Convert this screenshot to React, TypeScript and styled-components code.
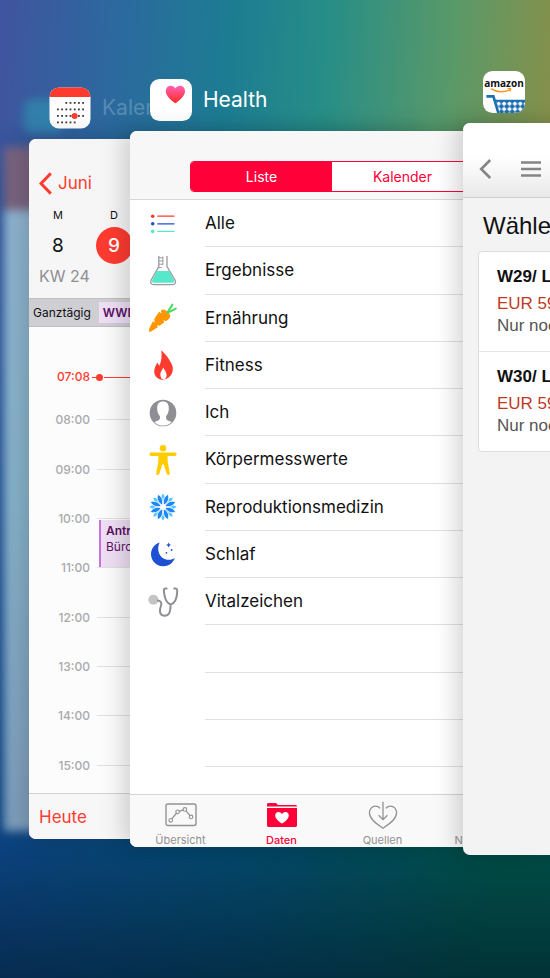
import React from "react";
import styled, { createGlobalStyle, css } from "styled-components";

const GlobalStyle = createGlobalStyle`
  *, *::before, *::after { box-sizing: border-box; }
  body { margin: 0; background: #05365a; }
  button { font: inherit; color: inherit; background: none; border: 0; padding: 0; margin: 0; cursor: pointer; }
  h1, h2, h3, p, ul, ol { margin: 0; padding: 0; font: inherit; list-style: none; }
  svg { display: block; flex: none; }
`;

const UI = `Inter, "Liberation Sans", sans-serif`;
const SHOP = `"Liberation Sans", Arial, sans-serif`;
const RED = "#ff3b30";
const PINK = "#ff0038";

/* ---------- switcher stage ---------- */

const Wallpaper = styled.div`
  position: relative;
  overflow: hidden;
  min-height: 100vh;
  display: flex;
  font-family: ${UI};
  color: #111;
  background:
    linear-gradient(to bottom, transparent 86%, rgba(2, 20, 34, 0.5) 100%),
    linear-gradient(to right, #0b437f 0%, #04496c 45%, #015048 90%);

  &::before {
    content: "";
    position: absolute;
    inset: 0;
    background: linear-gradient(94deg, #40549f 0%, #2b6a9e 20%, #1c7d92 38%, #288e86 54%, #5a9968 74%, #87904a 91%);
    mask-image: linear-gradient(to bottom, #000 12%, rgba(0, 0, 0, 0.75) 20%, rgba(0, 0, 0, 0.7) 40%, transparent 88%);
  }
`;

const Stage = styled.main`
  position: relative;
  flex: 1;
  min-width: 0;
  display: grid;
  grid-template-columns: 4fr 25fr 101fr 333fr 87fr;
  padding: 71px 0 123px;
`;

const AppSlot = styled.section<{ $column: number; $depth: number }>`
  grid-row: 1;
  grid-column: ${(p) => p.$column} / -1;
  isolation: isolate;
  margin: ${(p) => p.$depth * 8}px 0;
  min-width: 0;
  display: flex;
  flex-direction: column;
`;

const AppTitle = styled.header`
  height: 42px;
  margin: 0 0 10px 20px;
  display: flex;
  align-items: center;
  gap: 11px;
`;

const AppName = styled.h2<{ $faded?: boolean }>`
  font-size: 21px;
  line-height: 24px;
  color: ${(p) => (p.$faded ? "rgba(255,255,255,0.22)" : "#fff")};
`;

const Card = styled.div<{ $width: number; $tint: string }>`
  flex: 1;
  width: ${(p) => p.$width}px;
  display: flex;
  flex-direction: column;
  overflow: hidden;
  border-radius: 7px;
  background: ${(p) => p.$tint};
  box-shadow: -6px 0 24px rgba(0, 0, 0, 0.18);
`;

const BlurredSlot = styled(AppSlot)`
  filter: blur(5px);
`;

const BlurredIcon = styled.div`
  width: 40px;
  height: 34px;
  border-radius: 8px;
  background: #2f8fb0;
  opacity: 0.7;
`;

const BlurredCard = styled.div`
  flex: 1;
  width: 160px;
  background: linear-gradient(to bottom, #7b6480 0 63px, #90b5d1 63px, #88b4cc 50%, #809fbe 100%);
`;

/* ---------- calendar ---------- */

const CalHeader = styled.div`
  height: 159px;
  padding: 31px 0 0;
  background: #f6f6f7;
`;

const BackButton = styled.button`
  display: flex;
  align-items: center;
  gap: 6px;
  height: 26px;
  margin-left: 10px;
  color: ${RED};
  font-size: 17px;
`;

const Week = styled.ol`
  display: grid;
  grid-template-columns: repeat(7, 56px);
  margin: 11px 0 0 1px;
`;

const Day = styled.li`
  display: flex;
  flex-direction: column;
  align-items: center;
  gap: 4px;
  font-size: 11px;
  line-height: 16px;
`;

const DayNumber = styled.button<{ $today?: boolean }>`
  width: 37px;
  height: 37px;
  border-radius: 50%;
  font-size: 19px;
  font-weight: ${(p) => (p.$today ? 500 : 400)};
  background: ${(p) => (p.$today ? RED : "transparent")};
  color: ${(p) => (p.$today ? "#fff" : "#111")};
`;

const WeekLabel = styled.p`
  margin: 1px 0 0 10px;
  font-size: 16px;
  line-height: 22px;
  color: #8e8e93;
`;

const AllDay = styled.div`
  height: 29px;
  display: flex;
  align-items: center;
  gap: 8px;
  padding-left: 4px;
  background: #cfced3;
  border-top: 1px solid #c0bfc4;
  border-bottom: 1px solid #c0bfc4;
  font-size: 12px;
`;

const AllDayEvent = styled.span`
  flex: 1;
  padding-left: 4px;
  line-height: 21px;
  font-weight: 600;
  background: #eedff5;
  color: #5b1166;
`;

const DayView = styled.div`
  flex: 1;
  position: relative;
  display: flex;
  background: #fcfcfc;
  padding: 68px 0 3px;
`;

const Hours = styled.ol`
  flex: 1;
  display: grid;
  grid-auto-rows: 1fr;
`;

const Hour = styled.li`
  display: flex;
  align-items: center;
  gap: 7px;
  font-size: 12px;
  font-weight: 500;
  color: #a9a9ad;

  &::after {
    content: "";
    flex: 1;
    height: 1px;
    background: #e0e0e2;
  }
`;

const HourText = styled.span`
  width: 61px;
  text-align: right;
`;

const Now = styled.div`
  position: absolute;
  left: 0;
  right: 0;
  top: 42px;
  display: flex;
  align-items: center;
  font-size: 12px;
  font-weight: 500;
  line-height: 16px;
  color: ${RED};
`;

const NowDash = styled.span`
  width: 4px;
  height: 1px;
  margin-left: 2px;
  background: ${RED};
`;

const NowDot = styled.span`
  width: 7px;
  height: 7px;
  border-radius: 50%;
  background: ${RED};
`;

const NowLine = styled.span`
  flex: 1;
  height: 1px;
  margin-left: 1px;
  background: ${RED};
`;

const Appointment = styled.div`
  position: absolute;
  left: 70px;
  right: 0;
  top: 193px;
  height: 47px;
  padding: 3px 5px;
  border-left: 2px solid #c774e0;
  background: #efdff5;
  color: #5b1166;
  font-size: 12px;
  line-height: 16px;
`;

const Strong = styled.strong`
  display: block;
  font-weight: 600;
`;

const CalFooter = styled.footer`
  height: 46px;
  padding: 0 10px;
  display: flex;
  align-items: center;
  background: #f7f7f8;
  border-top: 1px solid #d2d2d5;
  color: ${RED};
  font-size: 17px;
`;

/* ---------- health ---------- */

const HealthBar = styled.div`
  height: 69px;
  padding: 30px 60px 0;
  background: #f7f7f7;
  border-bottom: 1px solid #d8d8da;
`;

const Segments = styled.div`
  display: flex;
  height: 31px;
  border: 1px solid ${PINK};
  border-radius: 4px;
  overflow: hidden;
`;

const Segment = styled.button<{ $on?: boolean }>`
  flex: 1;
  font-size: 14px;
  background: ${(p) => (p.$on ? PINK : "#fff")};
  color: ${(p) => (p.$on ? "#fff" : PINK)};
`;

const Categories = styled.ul`
  flex: 1;
  display: grid;
  grid-auto-rows: 1fr;
  padding-bottom: 27px;
  background: #fff;
`;

const Category = styled.li`
  display: flex;
  min-height: 24px;
`;

const CategoryButton = styled.button`
  flex: 1;
  display: flex;
  align-items: stretch;
  text-align: left;
  font-size: 17px;
`;

const CategoryIcon = styled.span`
  width: 75px;
  padding-left: 17px;
  display: flex;
  align-items: center;
`;

const CategoryLabel = styled.span`
  flex: 1;
  display: flex;
  align-items: center;
  border-bottom: 1px solid #e0e0e2;
`;

const Tabs = styled.nav`
  height: 53px;
  display: grid;
  grid-template-columns: repeat(4, 1fr);
  background: #f9f9f9;
  border-top: 1px solid #d4d4d6;
`;

const Tab = styled.button<{ $on?: boolean }>`
  display: flex;
  flex-direction: column;
  align-items: center;
  padding-top: 6px;
  gap: 2px;
  font-size: 11px;
  line-height: 14px;
  color: ${(p) => (p.$on ? PINK : "#929292")};
  ${(p) =>
    p.$on &&
    css`
      font-weight: 500;
    `}
`;

/* ---------- shop ---------- */

const ShopBar = styled.div`
  height: 75px;
  padding: 34px 0 0 16px;
  display: flex;
  align-items: flex-start;
  gap: 29px;
  background: linear-gradient(#fff 45%, #e9e9e9);
  border-bottom: 1px solid #cfcfcf;
  color: #858585;
`;

const IconButton = styled.button`
  display: flex;
  height: 24px;
  align-items: center;
`;

const ShopBody = styled.div`
  padding: 14px 15px;
  font-family: ${SHOP};
  white-space: nowrap;
`;

const ShopHeading = styled.h1`
  margin: 0 0 11px 5px;
  font-size: 24px;
  line-height: 28px;
`;

const Offers = styled.ul`
  border: 1px solid #dddddd;
  border-radius: 4px;
  background: #fff;
`;

const Offer = styled.li`
  height: 99px;
  padding: 14px 18px;
  font-size: 17px;
  line-height: 22px;
  color: #555;
  & + & {
    height: 100px;
    border-top: 1px solid #e4e4e4;
  }
`;

const OfferName = styled.h3`
  margin-bottom: 5px;
  font-weight: 700;
  color: #111;
`;

const Price = styled.p`
  color: #c0391f;
`;

/* ---------- app icons ---------- */

const CALENDAR_DOTS = [
  [2, 3, 4, 5, 6].map((c) => [c, 0]),
  [0, 1, 2, 3, 4, 5, 6].map((c) => [c, 1]),
  [0, 1, 2, 3, 4, 5, 6].map((c) => [c, 2]),
  [0, 1, 2, 3, 4].map((c) => [c, 3]),
].flat();

const CalendarAppIcon = () => (
  <svg width="42" height="42" viewBox="0 0 42 42" aria-hidden="true">
    <clipPath id="calClip"><rect x="0.5" y="0.5" width="41" height="41" rx="9.5" /></clipPath>
    <g clipPath="url(#calClip)">
      <rect width="42" height="42" fill="#fdfdfd" />
      <rect width="42" height="10" fill="#ff3b30" />
      {CALENDAR_DOTS.map(([c, r]) => (
        <rect key={`${c}-${r}`} x={8 + c * 4.2} y={15 + r * 6.5} width="1.8" height="1.8" fill="#3a3a3a" />
      ))}
      <circle cx="25.6" cy="29" r="3" fill="#ff3b30" />
    </g>
  </svg>
);

const HealthAppIcon = () => (
  <svg width="42" height="42" viewBox="0 0 42 42" aria-hidden="true">
    <defs>
      <linearGradient id="heartFill" x1="0" y1="0" x2="0" y2="1">
        <stop offset="0" stopColor="#ff61b6" />
        <stop offset="1" stopColor="#ff2a1f" />
      </linearGradient>
    </defs>
    <rect width="42" height="42" rx="9.5" fill="#fff" />
    <path
      d="M25.4 24.3C22.5 22 15.8 17.6 15.8 12.2C15.8 8.9 18 6.8 20.6 6.8C22.7 6.8 24.4 7.8 25.4 9.6C26.4 7.8 28.1 6.8 30.2 6.8C32.8 6.8 35 8.9 35 12.2C35 17.6 28.3 22 25.4 24.3Z"
      fill="url(#heartFill)"
    />
  </svg>
);

const AmazonAppIcon = () => (
  <svg width="42" height="42" viewBox="0 0 42 42" role="img" aria-label="Amazon">
    <defs>
      <clipPath id="amzClip"><rect width="42" height="42" rx="9.5" /></clipPath>
      <pattern id="mesh" width="5.4" height="5.4" patternUnits="userSpaceOnUse" x="13" y="30">
        <rect width="5.4" height="5.4" fill="#1d70b4" />
        <path d="M2.7 0.3L5.1 2.7L2.7 5.1L0.3 2.7Z" fill="#fff" />
      </pattern>
    </defs>
    <g clipPath="url(#amzClip)">
      <rect width="42" height="42" fill="#fff" />
      <text x="21" y="16" textAnchor="middle" fontFamily="Open Sans, sans-serif" fontWeight="700" fontSize="10" fill="#111">
        amazon
      </text>
      <path d="M8 17.6C14 21.8 22 21.8 27.4 18.4" fill="none" stroke="#f79a1f" strokeWidth="1.5" />
      <path d="M24.6 17.6L28 17.5L27 20.6" fill="none" stroke="#f79a1f" strokeWidth="1" />
      <path d="M13 29.5H42V42H16.6Z" fill="url(#mesh)" />
      <path d="M3.4 25.4H10.4L15.4 42" fill="none" stroke="#1d70b4" strokeWidth="2.6" />
      <path d="M12 29.6H42" stroke="#1d70b4" strokeWidth="1.8" />
    </g>
  </svg>
);

/* ---------- category icons ---------- */

const Glyph = ({ children }: { children: React.ReactNode }) => (
  <svg width="32" height="32" viewBox="0 0 32 32" fill="none" aria-hidden="true">
    {children}
  </svg>
);

const ListGlyph = () => (
  <Glyph>
    {["#ff3b30", "#1f4fd6", "#55e8cb"].map((c, i) => (
      <g key={c} transform={`translate(0 ${i * 7.6})`}>
        <circle cx="5.7" cy="8.2" r="1.8" fill={c} />
        <path d="M10.3 8.2H27.5" stroke={c} strokeWidth="1.3" />
      </g>
    ))}
  </Glyph>
);

const FlaskGlyph = () => (
  <Glyph>
    <path d="M11.8 1V11.5L4.2 25C3 27.4 4 29.6 6.8 29.6H25.4C28.2 29.6 29.2 27.4 28 25L20 11.5V1" stroke="#9a9aa0" strokeWidth="1.3" />
    <path d="M10 16H22.2L27 25C27.7 26.6 27 27.8 25.4 27.8H6.9C5.2 27.8 4.5 26.6 5.3 25Z" fill="#55e8cb" />
    <path d="M12 2.8H16M12 6H16M12 9.2H16M11.5 12.6H14.8M15.9 1.5V10" stroke="#9a9aa0" strokeWidth="1" />
  </Glyph>
);

const CarrotGlyph = () => (
  <Glyph>
    <path
      d="M2.4 29.7C1.4 29 2 27 3.6 23.8L6 19.2L7.8 20.4L7.2 17.2C8.8 14.4 10.4 12 12.3 9.8L14.4 11.6L14 8.4C15.6 7 17.7 7.2 19.6 9L21.8 11.1C24 13.3 23.7 15.6 21.3 17.4L18.7 19.2L16.4 17.9L17.2 20.4L12.4 23.8L10.2 23L10.7 25.2L5.6 28.6C4.2 29.5 3.1 30.1 2.4 29.7Z"
      fill="#ff9500"
    />
    <path d="M20.4 10.6L25.4 2.6M21 10.6L28.8 6.6" stroke="#4cd964" strokeWidth="2" strokeLinecap="round" />
  </Glyph>
);

const FlameGlyph = () => (
  <Glyph>
    <path
      fillRule="evenodd"
      d="M14.2 1.2C19 5 22.6 10.8 25 15.8C27.5 22 24.3 29 17 30.6C10 31.4 6.4 25.6 7.4 20.4C8 17.6 9.2 15.6 10.2 13.4L12.4 16.8C14.4 12.4 15.2 6.4 14.2 1.2ZM16.4 18.4C15 21 13 23.4 13.4 26.4C13.8 29 15 30.2 16.6 30.2C18.6 30.2 19.6 28.4 19.6 26.2C19.6 23.2 17.6 21.2 16.4 18.4Z"
      fill="#ff3b30"
    />
  </Glyph>
);

const PersonGlyph = () => (
  <Glyph>
    <clipPath id="meClip"><circle cx="16" cy="16" r="12.6" /></clipPath>
    <circle cx="16" cy="16" r="13.3" fill="#8e8e93" />
    <g clipPath="url(#meClip)">
      <path
        d="M16 4.6C11.6 4.6 10 7.6 10.2 12C10.3 15 11.4 17.4 12.8 19C13.3 21.8 12.6 23 9.8 24C7.4 24.9 5.6 25.8 5 27V30H27V27C26.4 25.8 24.6 24.9 22.2 24C19.4 23 18.7 21.8 19.2 19C20.6 17.4 21.7 15 21.8 12C22 7.6 20.4 4.6 16 4.6Z"
        fill="#fff"
      />
    </g>
  </Glyph>
);

const BodyGlyph = () => (
  <Glyph>
    <circle cx="16" cy="4.2" r="3.3" fill="#ffcc00" />
    <path
      d="M4 8.6H28C30 8.6 30 12 28 12H20.6V17L22.8 29.2C23 31.2 20.2 31.6 19.7 29.8L16.7 20.4H15.3L12.3 29.8C11.8 31.6 9 31.2 9.2 29.2L11.4 17V12H4C2 12 2 8.6 4 8.6Z"
      fill="#ffcc00"
    />
  </Glyph>
);

const PETAL_ANGLES = [22.5, 67.5, 112.5, 157.5, 202.5, 247.5, 292.5, 337.5];

const FlowerGlyph = () => (
  <Glyph>
    {PETAL_ANGLES.map((a) => (
      <path key={`s${a}`} transform={`rotate(${a + 22.5} 16 16)`} d="M16 2.4C18.4 5 18.4 8 16 10.6C13.6 8 13.6 5 16 2.4Z" fill="#5ac8fa" />
    ))}
    {PETAL_ANGLES.map((a) => (
      <path
        key={a}
        transform={`rotate(${a} 16 16)`}
        d="M16 2.2C19.4 6.4 18.8 10.6 16 14C13.2 10.6 12.6 6.4 16 2.2Z"
        fill="#1f87f5"
        stroke="#fff"
        strokeWidth="0.8"
      />
    ))}
  </Glyph>
);

const MoonGlyph = () => (
  <Glyph>
    <path d="M12.6 4.4C9.4 11 11.8 19.4 19 21.4C22.4 22.3 25.4 21.6 27.8 20C25.8 25.6 21 28.4 16 28.2C9 28 4 22.6 4 16.2C4 10.8 7.4 6 12.6 4.4Z" fill="#1d50d2" />
    <path d="M21.6 4.4L22.4 6.2L24.2 7L22.4 7.8L21.6 9.6L20.8 7.8L19 7L20.8 6.2Z" fill="#1d50d2" />
    <circle cx="24.6" cy="12" r="0.9" fill="#1d50d2" />
    <circle cx="19.4" cy="14.8" r="0.9" fill="#1d50d2" />
  </Glyph>
);

const StethoscopeGlyph = () => (
  <Glyph>
    <circle cx="6.4" cy="13.8" r="5" fill="#c4c4c6" />
    <path
      d="M10 14.6C14 14.6 15 16.6 14 19.6C12.4 23.8 12 29.6 17.2 29.8C22.6 30 23.4 25.4 23.6 19.4"
      stroke="#8e8e93"
      strokeWidth="2"
    />
    <path
      d="M19.6 2.4H18.2C16.6 2.4 16.8 4 17 6C17.4 11.2 19 16.8 23.7 18.6C28.6 16.8 30 11.2 30.2 6C30.3 4 30.2 2.4 28.6 2.4H27.2"
      stroke="#8e8e93"
      strokeWidth="2"
      strokeLinecap="round"
    />
  </Glyph>
);

/* ---------- tab icons ---------- */

const OverviewGlyph = () => (
  <svg width="32" height="30" viewBox="0 0 32 30" fill="none" stroke="#929292" aria-hidden="true">
    <rect x="1" y="3" width="30" height="21.5" rx="2" strokeWidth="1.4" />
    <path d="M6.8 17.8L11.6 12M14.2 10.4L18.3 8.9M21.2 10.2L25 14.6" strokeWidth="1.3" />
    {[[5.7, 19.3], [12.6, 10.8], [19.9, 8.4], [26, 15.9]].map(([x, y]) => (
      <circle key={x} cx={x} cy={y} r="1.8" strokeWidth="1.1" />
    ))}
  </svg>
);

const FolderGlyph = () => (
  <svg width="32" height="30" viewBox="0 0 32 30" aria-hidden="true">
    <path d="M1 5.6V3.4Q1 2 2.4 2H10L12 4H29.6Q31 4 31 5.4V5.6Z" fill="#ff0038" />
    <path d="M1 7H31V24.6Q31 26 29.6 26H2.4Q1 26 1 24.6Z" fill="#ff0038" />
    <path
      d="M16 22.6C13.6 20.8 9.2 18 9.2 14.4C9.2 12.2 10.6 10.9 12.4 10.9C14 10.9 15.2 11.7 16 13C16.8 11.7 18 10.9 19.6 10.9C21.4 10.9 22.8 12.2 22.8 14.4C22.8 18 18.4 20.8 16 22.6Z"
      fill="#fff"
    />
  </svg>
);

const SourcesGlyph = () => (
  <svg width="32" height="30" viewBox="0 0 32 30" fill="none" stroke="#929292" strokeWidth="1.3" aria-hidden="true">
    <path d="M13.2 7.4C11.8 5.8 10.2 5.2 8.4 5.2C5 5.2 2.4 8 2.4 11.8C2.4 18.4 10.4 23.6 16 27.2C21.6 23.6 29.6 18.4 29.6 11.8C29.6 8 27 5.2 23.6 5.2C21.8 5.2 20.2 5.8 18.8 7.4" />
    <path d="M16 0.8V18.4M11.6 14.2L16 18.6L20.4 14.2" />
  </svg>
);

const EmergencyGlyph = () => (
  <svg width="32" height="30" viewBox="0 0 32 30" stroke="#929292" strokeWidth="1.4" aria-hidden="true">
    <path d="M16 5V25M7 10L25 20M25 10L7 20" />
  </svg>
);

/* ---------- data ---------- */

const CATEGORIES: { label: string; icon: React.ReactNode }[] = [
  { label: "Alle", icon: <ListGlyph /> },
  { label: "Ergebnisse", icon: <FlaskGlyph /> },
  { label: "Ernährung", icon: <CarrotGlyph /> },
  { label: "Fitness", icon: <FlameGlyph /> },
  { label: "Ich", icon: <PersonGlyph /> },
  { label: "Körpermesswerte", icon: <BodyGlyph /> },
  { label: "Reproduktionsmedizin", icon: <FlowerGlyph /> },
  { label: "Schlaf", icon: <MoonGlyph /> },
  { label: "Vitalzeichen", icon: <StethoscopeGlyph /> },
];

const EMPTY_ROWS = [0, 1, 2];
const HOURS = ["08:00", "09:00", "10:00", "11:00", "12:00", "13:00", "14:00", "15:00"];

const CalendarApp = () => (
  <AppSlot $column={3} $depth={2} aria-label="Kalender">
    <AppTitle>
      <CalendarAppIcon />
      <AppName $faded>Kalender</AppName>
    </AppTitle>
    <Card $width={392} $tint="#fcfcfc">
      <CalHeader>
        <BackButton>
          <svg width="13" height="23" viewBox="0 0 13 23" fill="none" stroke="currentColor" strokeWidth="3" aria-hidden="true">
            <path d="M11.8 1.4L2 11.5L11.8 21.6" />
          </svg>
          Juni
        </BackButton>
        <Week>
          <Day>M<DayNumber>8</DayNumber></Day>
          <Day>D<DayNumber $today>9</DayNumber></Day>
        </Week>
        <WeekLabel>KW 24</WeekLabel>
      </CalHeader>
      <AllDay>
        <span>Ganztägig</span>
        <AllDayEvent>WWDC</AllDayEvent>
      </AllDay>
      <DayView>
        <Hours>
          {HOURS.map((h) => (
            <Hour key={h}><HourText>{h}</HourText></Hour>
          ))}
        </Hours>
        <Now>
          <HourText>07:08</HourText>
          <NowDash />
          <NowDot />
          <NowLine />
        </Now>
        <Appointment>
          <Strong>Antrag</Strong>
          Büro
        </Appointment>
      </DayView>
      <CalFooter><button>Heute</button></CalFooter>
    </Card>
  </AppSlot>
);

const HealthApp = () => (
  <AppSlot $column={4} $depth={1} aria-label="Health">
    <AppTitle>
      <HealthAppIcon />
      <AppName>Health</AppName>
    </AppTitle>
    <Card $width={404} $tint="#fff">
      <HealthBar>
        <Segments>
          <Segment $on aria-pressed="true">Liste</Segment>
          <Segment aria-pressed="false">Kalender</Segment>
        </Segments>
      </HealthBar>
      <Categories>
        {CATEGORIES.map((c) => (
          <Category key={c.label}>
            <CategoryButton>
              <CategoryIcon>{c.icon}</CategoryIcon>
              <CategoryLabel>{c.label}</CategoryLabel>
            </CategoryButton>
          </Category>
        ))}
        {EMPTY_ROWS.map((n) => (
          <Category key={n} aria-hidden="true">
            <CategoryIcon />
            <CategoryLabel />
          </Category>
        ))}
      </Categories>
      <Tabs>
        <Tab><OverviewGlyph />Übersicht</Tab>
        <Tab $on><FolderGlyph />Daten</Tab>
        <Tab><SourcesGlyph />Quellen</Tab>
        <Tab><EmergencyGlyph />Notfallpass</Tab>
      </Tabs>
    </Card>
  </AppSlot>
);

const ShopApp = () => (
  <AppSlot $column={5} $depth={0} aria-label="Amazon">
    <AppTitle><AmazonAppIcon /></AppTitle>
    <Card $width={412} $tint="#f3f3f3">
      <ShopBar>
        <IconButton aria-label="Zurück">
          <svg width="13" height="20" viewBox="0 0 13 20" fill="none" stroke="currentColor" strokeWidth="2.6" aria-hidden="true">
            <path d="M11.2 1L2.2 10L11.2 19" />
          </svg>
        </IconButton>
        <IconButton aria-label="Menü">
          <svg width="20" height="18" viewBox="0 0 20 18" stroke="currentColor" strokeWidth="2.4" aria-hidden="true">
            <path d="M0 2.5H20M0 9H20M0 15.5H20" />
          </svg>
        </IconButton>
      </ShopBar>
      <ShopBody>
        <ShopHeading>Wählen</ShopHeading>
        <Offers>
          {["W29/ L32", "W30/ L32"].map((name) => (
            <Offer key={name}>
              <OfferName>{name}</OfferName>
              <Price>EUR 59,95</Price>
              <p>Nur noch 1</p>
            </Offer>
          ))}
        </Offers>
      </ShopBody>
    </Card>
  </AppSlot>
);

/* The cards are listed back to front; each one covers the right part of the card before it. */
export default function App() {
  return (
    <>
      <GlobalStyle />
      <Wallpaper>
        <Stage>
          <BlurredSlot $column={2} $depth={3} aria-hidden="true">
            <AppTitle><BlurredIcon /></AppTitle>
            <BlurredCard />
          </BlurredSlot>
          <CalendarApp />
          <HealthApp />
          <ShopApp />
        </Stage>
      </Wallpaper>
    </>
  );
}
